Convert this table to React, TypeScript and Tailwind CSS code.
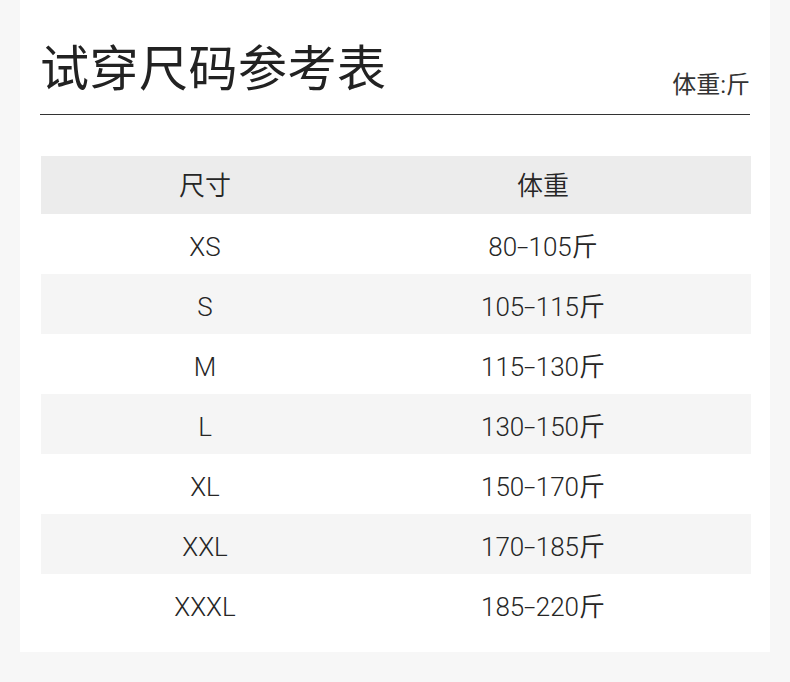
import React from "react";

const rows = [
  ["XS", "80", "105"],
  ["S", "105", "115"],
  ["M", "115", "130"],
  ["L", "130", "150"],
  ["XL", "150", "170"],
  ["XXL", "170", "185"],
  ["XXXL", "185", "220"],
];

export default function App() {
  return (
    <div
      className="w-[790px] h-[682px] bg-[#f7f7f7] px-[20px] pb-[30px]"
      style={{ fontFamily: 'Roboto, "Noto Sans CJK SC", sans-serif' }}
    >
      <div className="h-[652px] bg-white px-[20px] pt-[40px] text-[#222]">
        <div className="flex items-end justify-between border-b border-[#333] pb-[14px]">
          <div className="text-[49px] leading-[60px] tracking-[0.5px]">试穿尺码参考表</div>
          <div className="text-[24px] leading-[24px] text-[#333] mb-[3px]">体重:斤</div>
        </div>
        <div className="mt-[41px] ml-[1px] w-[710px] text-[26px] font-[350] text-[#262626]">
          <div className="grid grid-cols-[328px_348px_1fr] h-[58px] items-center bg-[#ececec] pt-[2px]">
            <div className="text-center text-[26px]">尺寸</div>
            <div className="text-center text-[26px]">体重</div>
            <div />
          </div>
          {rows.map(([s, a, b], i) => (
            <div
              key={s}
              className={
                "grid grid-cols-[328px_348px_1fr] h-[60px] items-center pt-[6px] " +
                (i % 2 === 1 ? "bg-[#f5f5f5]" : "bg-white")
              }
            >
              <div className="text-center">{s}</div>
              <div className="text-center">
                {a}
                <span className="inline-block mx-[2px] scale-x-[1.6]">-</span>
                {b}斤
              </div>
              <div />
            </div>
          ))}
        </div>
      </div>
    </div>
  );
}
